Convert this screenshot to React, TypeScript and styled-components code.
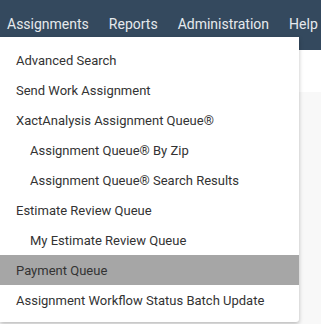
import styled, { createGlobalStyle } from "styled-components";

const GlobalStyle = createGlobalStyle`
  html, body {
    margin: 0;
    padding: 0;
    background: #ffffff;
    font-family: Roboto, "Liberation Sans", sans-serif;
  }
`;

const Page = styled.div`
  position: relative;
  width: 321px;
  height: 324px;
  overflow: hidden;
  background: #ffffff;
`;

const NavBar = styled.nav`
  height: 50px;
  background: #34495e;
  display: flex;
  align-items: flex-start;
  gap: 20px;
  padding: 14px 0 0 7px;
  box-sizing: border-box;
`;

const NavItem = styled.span`
  color: #e6e9ed;
  font-size: 14px;
  line-height: 20px;
  white-space: nowrap;
`;

const Content = styled.div`
  padding-top: 42px;
`;

const Panel = styled.div`
  height: 240px;
  background: #f8f8f8;
`;

const Dropdown = styled.ul`
  position: absolute;
  top: 37px;
  left: 0;
  width: 299px;
  margin: 0;
  padding: 8px 0 7px;
  list-style: none;
  background: #ffffff;
  box-shadow: 0 2px 4px rgba(0, 0, 0, 0.25);
  border-radius: 0 0 3px 0;
`;

const MenuItem = styled.li<{ $indent?: boolean; $active?: boolean }>`
  height: 30px;
  display: flex;
  align-items: center;
  padding-left: ${(p) => (p.$indent ? "30px" : "16px")};
  font-size: 13px;
  color: #333333;
  white-space: nowrap;
  background: ${(p) => (p.$active ? "#a6a6a6" : "transparent")};
`;

const items = [
  { label: "Advanced Search" },
  { label: "Send Work Assignment" },
  { label: "XactAnalysis Assignment Queue®" },
  { label: "Assignment Queue® By Zip", indent: true },
  { label: "Assignment Queue® Search Results", indent: true },
  { label: "Estimate Review Queue" },
  { label: "My Estimate Review Queue", indent: true },
  { label: "Payment Queue", active: true },
  { label: "Assignment Workflow Status Batch Update" },
];

export default function App() {
  return (
    <Page>
      <GlobalStyle />
      <NavBar>
        <NavItem>Assignments</NavItem>
        <NavItem>Reports</NavItem>
        <NavItem>Administration</NavItem>
        <NavItem>Help</NavItem>
      </NavBar>
      <Content>
        <Panel />
      </Content>
      <Dropdown>
        {items.map((it) => (
          <MenuItem key={it.label} $indent={it.indent} $active={it.active}>
            {it.label}
          </MenuItem>
        ))}
      </Dropdown>
    </Page>
  );
}
